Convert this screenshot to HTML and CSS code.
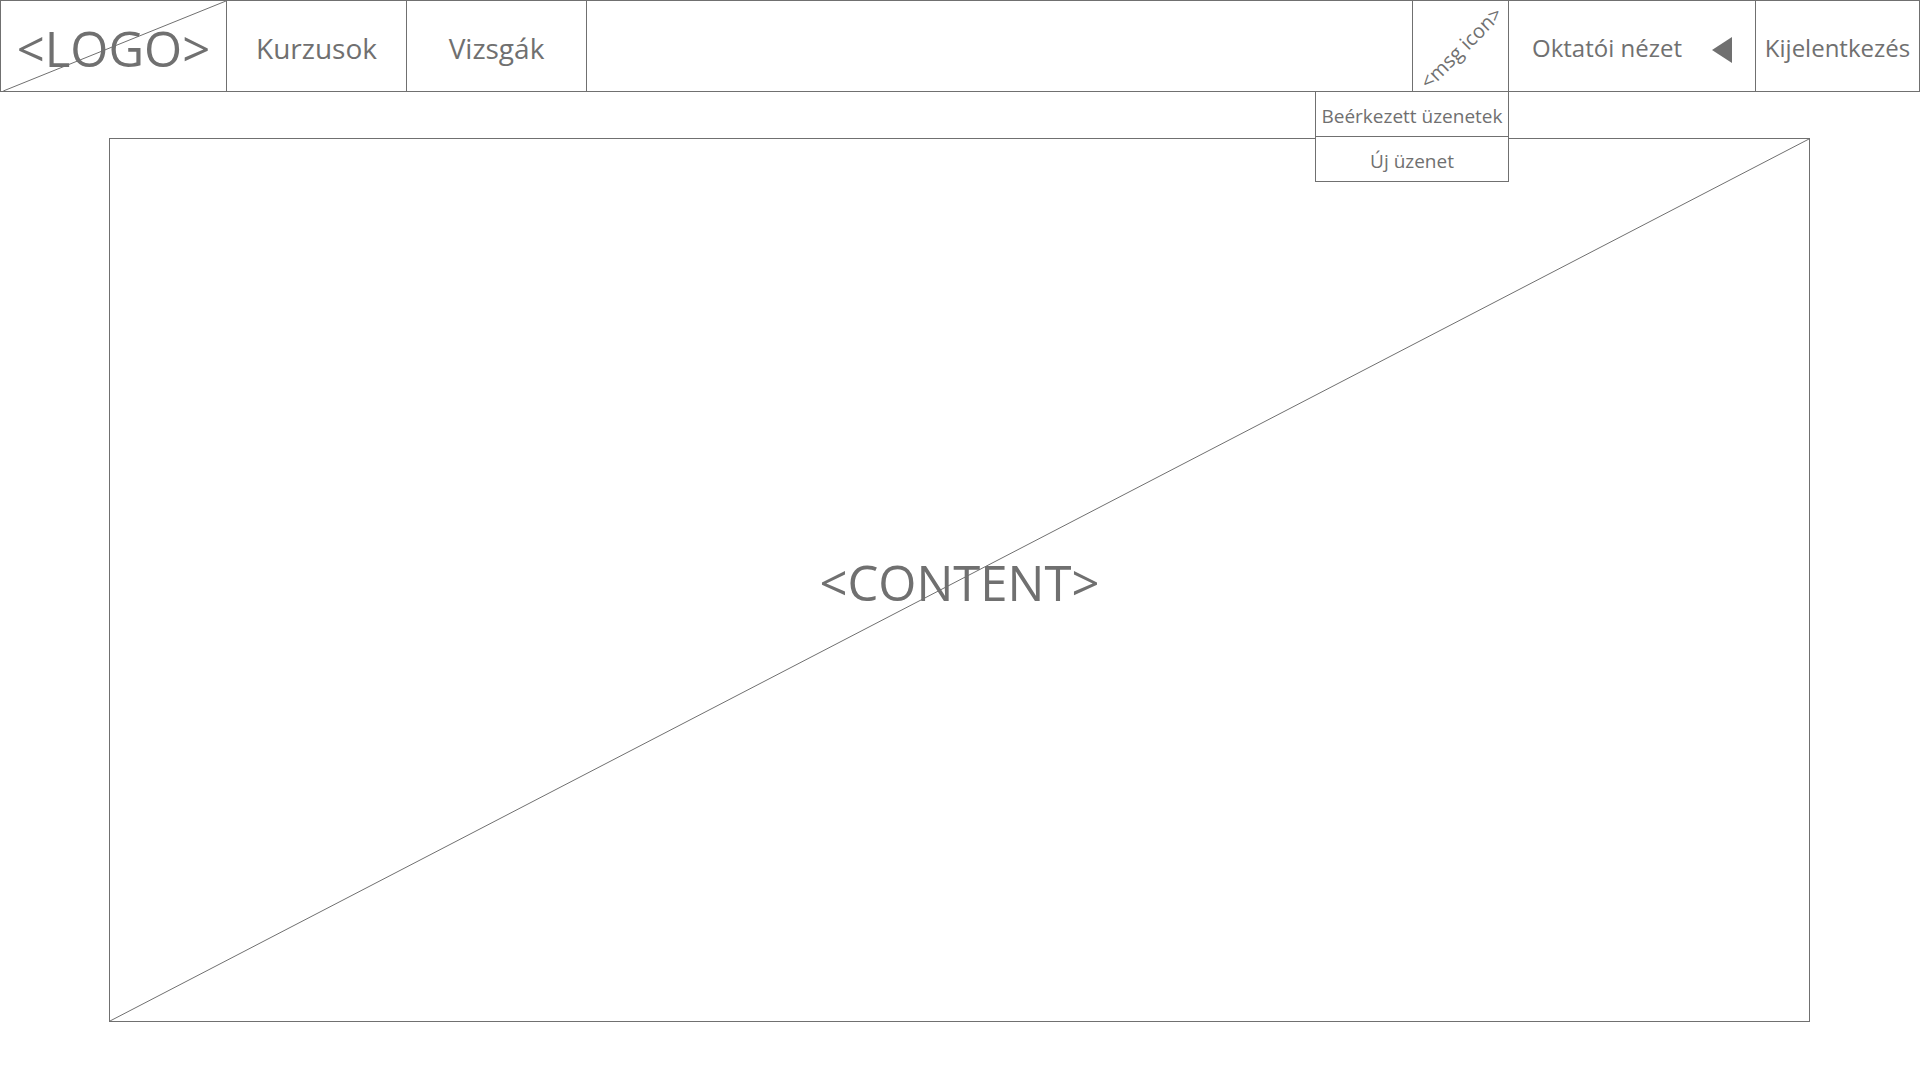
FILE: index.html
```html
<!DOCTYPE html>
<html lang="hu">
<head>
<meta charset="utf-8">
<meta name="viewport" content="width=device-width, initial-scale=1">
<title>Kurzusok</title>
<link rel="stylesheet" href="styles.css">
</head>
<body>
<header class="topbar">
  <a class="logo" href="#">
    &lt;LOGO&gt;
    <svg class="diagonal" viewBox="0 0 100 100" preserveAspectRatio="none" aria-hidden="true"><line x1="1" y1="100" x2="100" y2="0"/></svg>
  </a>
  <nav class="nav">
    <a class="nav-link" href="#">Kurzusok</a>
    <a class="nav-link" href="#">Vizsgák</a>
  </nav>
  <div class="messages">
    <button class="messages-button" type="button" aria-expanded="true"><span class="messages-icon">&lt;msg icon&gt;</span></button>
    <div class="menu">
      <a class="menu-link" href="#">Beérkezett üzenetek</a>
      <a class="menu-link" href="#">Új üzenet</a>
    </div>
  </div>
  <button class="view-switch" type="button">
    Oktatói nézet
    <svg class="arrow" viewBox="0 0 20 30" aria-hidden="true"><path d="M0 17 20 4V30Z"/></svg>
  </button>
  <button class="logout" type="button">Kijelentkezés</button>
</header>
<main class="content">
  &lt;CONTENT&gt;
  <svg class="diagonal" viewBox="0 0 100 100" preserveAspectRatio="none" aria-hidden="true"><line x1="0" y1="100" x2="100" y2="0"/></svg>
</main>
</body>
</html>
```
FILE: styles.css
```css
* {
  box-sizing: border-box;
}

body {
  display: flex;
  flex-direction: column;
  min-height: 100vh;
  margin: 0;
  background: #fff;
  color: #707070;
  font-family: "Open Sans", "Noto Sans", sans-serif;
}

a {
  color: inherit;
  text-decoration: none;
}

button {
  padding: 0;
  border: 0;
  background: none;
  color: inherit;
  font: inherit;
  cursor: pointer;
}

.topbar {
  display: flex;
  min-height: 92px;
  border: 1px solid #707070;
}

.logo,
.nav-link,
.messages-button,
.menu-link,
.view-switch,
.logout,
.content {
  display: flex;
  align-items: center;
  justify-content: center;
  padding-top: 3px;
  white-space: nowrap;
}

.logo {
  position: relative;
  width: 226px;
  border-right: 1px solid #707070;
  font-size: 49px;
  line-height: 64px;
}

.diagonal {
  position: absolute;
  inset: 0;
  width: 100%;
  height: 100%;
}

.diagonal line {
  stroke: #707070;
  stroke-width: 1px;
  vector-effect: non-scaling-stroke;
}

.nav {
  display: flex;
  flex: 1;
}

.nav-link {
  width: 180px;
  border-right: 1px solid #707070;
  font-size: 28px;
}

.messages {
  position: relative;
  display: flex;
  width: 96px;
  border-left: 1px solid #707070;
}

.messages-button {
  width: 100%;
}

.messages-icon {
  width: 0;
  display: flex;
  justify-content: center;
  font-size: 20px;
  transform: rotate(-45deg);
}

.menu {
  position: absolute;
  z-index: 1;
  top: 100%;
  right: -1px;
  width: 194px;
  border: 1px solid #707070;
  background: #fff;
  font-size: 19px;
}

.menu-link {
  height: 44px;
}

.menu-link + .menu-link {
  height: 45px;
  border-top: 1px solid #707070;
}

.view-switch {
  gap: 30px;
  width: 247px;
  border-left: 1px solid #707070;
  font-size: 24px;
}

.arrow {
  width: 20px;
  height: 30px;
  fill: #707070;
}

.logout {
  width: 164px;
  border-left: 1px solid #707070;
  font-size: 24px;
}

.content {
  position: relative;
  flex: 1;
  margin: 46px 110px 58px 109px;
  border: 1px solid #707070;
  font-size: 49px;
}
```
